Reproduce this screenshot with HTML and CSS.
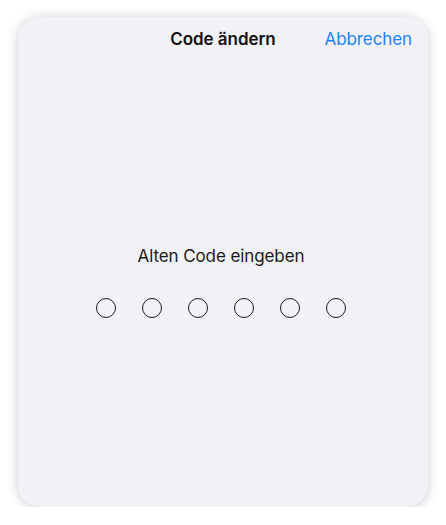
FILE: index.html
```html
<!DOCTYPE html>
<html lang="de">
<head>
<meta charset="utf-8">
<link rel="stylesheet" href="styles.css">
</head>
<body>
<div class="card">
  <div class="header">
    <span></span>
    <span class="title">Code ändern</span>
    <span class="cancel">Abbrechen</span>
  </div>
  <div class="content">
    <div class="prompt">Alten Code eingeben</div>
    <div class="dots">
      <span class="dot"></span>
      <span class="dot"></span>
      <span class="dot"></span>
      <span class="dot"></span>
      <span class="dot"></span>
      <span class="dot"></span>
    </div>
  </div>
</div>
</body>
</html>
```
FILE: styles.css
```css
html, body {
  margin: 0;
  padding: 0;
  background: #ffffff;
}
body {
  padding: 17px 18px 0 18px;
  font-family: Inter, "Noto Sans", sans-serif;
  -webkit-font-smoothing: antialiased;
}
.card {
  width: 410px;
  height: 490px;
  box-sizing: border-box;
  background: #f2f1f6;
  border-radius: 22px;
  box-shadow: 0 1px 12px rgba(0, 0, 0, 0.2);
  display: flex;
  flex-direction: column;
}
.header {
  display: grid;
  grid-template-columns: 1fr auto 1fr;
  align-items: center;
  padding: 11px 16px 0 16px;
  line-height: 22px;
  font-size: 17px;
}
.title {
  font-weight: 600;
  color: #111113;
  letter-spacing: -0.05px;
}
.cancel {
  justify-self: end;
  color: #1a84fa;
  letter-spacing: -0.1px;
}
.content {
  display: flex;
  flex-direction: column;
  align-items: center;
  margin-top: 195px;
  padding-right: 4px;
}
.prompt {
  font-size: 17px;
  line-height: 22px;
  color: #1a1a1c;
  letter-spacing: -0.1px;
}
.dots {
  display: flex;
  gap: 26px;
  margin-top: 31px;
}
.dot {
  width: 20px;
  height: 20px;
  box-sizing: border-box;
  border: 1.3px solid #1c1c1e;
  border-radius: 50%;
}
```
